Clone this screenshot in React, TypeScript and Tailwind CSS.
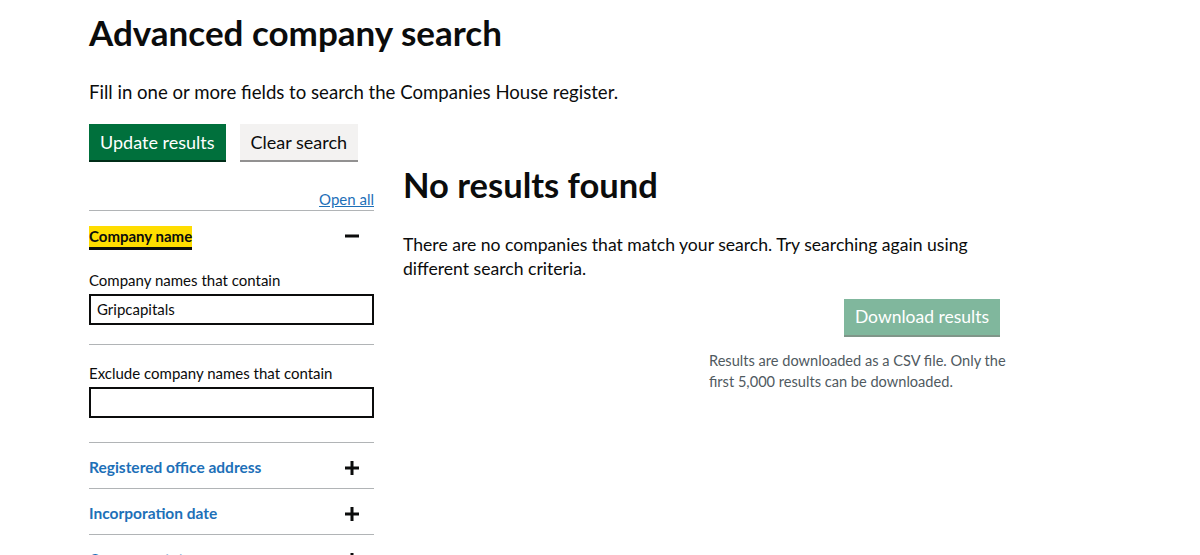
import React from "react"

const font = { fontFamily: 'Lato, "Noto Sans", Arial, sans-serif' }

function Plus() {
  return (
    <svg width="14" height="14" viewBox="0 0 14 14" className="shrink-0">
      <rect x="5.5" y="0" width="3" height="14" fill="#0b0c0c" />
      <rect x="0" y="5.5" width="14" height="3" fill="#0b0c0c" />
    </svg>
  )
}

function Minus() {
  return (
    <svg width="14" height="14" viewBox="0 0 14 14" className="shrink-0">
      <rect x="0" y="5.5" width="14" height="3" fill="#0b0c0c" />
    </svg>
  )
}

function Section({ title }: { title: string }) {
  return (
    <div className="flex h-[46px] items-center justify-between border-b border-[#b1b4b6] pr-[15px] pt-[4px]">
      <span className="text-[15.5px] font-bold text-[#1d70b8]">{title}</span>
      <Plus />
    </div>
  )
}

export default function App() {
  return (
    <div className="min-h-[555px] bg-white text-[#0b0c0c]" style={font}>
      <div className="pl-[89px] pt-[12px]">
        <h1 className="text-[35px] font-bold leading-[40px]">Advanced company search</h1>
        <p className="mt-[28px] text-[18.6px] leading-[25px]">
          Fill in one or more fields to search the Companies House register.
        </p>

        <div className="mt-[19px] flex gap-[14px]">
          <button className="h-[36px] bg-[#00703c] px-[11px] text-[18px] text-white shadow-[0_2px_0_#002d18]">
            Update results
          </button>
          <button className="h-[36px] bg-[#f3f2f1] px-[11px] text-[18px] text-[#0b0c0c] shadow-[0_2px_0_#929191]">
            Clear search
          </button>
        </div>

        <div className="mt-[10px] flex gap-[29px]">
          {/* filters */}
          <div className="w-[285px] pt-[19px]">
            <div className="flex justify-end">
              <a className="text-[15px] leading-[21px] text-[#1d70b8] underline">Open all</a>
            </div>
            <div className="border-t border-[#b1b4b6]">
              <div className="flex h-[50px] items-center justify-between pr-[15px]">
                <span className="bg-[#ffdd00] text-[15px] font-bold leading-[21px] shadow-[0_3px_0_#0b0c0c]">
                  Company name
                </span>
                <Minus />
              </div>
              <div className="border-b border-[#b1b4b6] pb-[19px] pt-[9px]">
                <label className="block text-[15px] leading-[20px]">Company names that contain</label>
                <div className="mt-[4px] flex h-[31px] items-center border-2 border-[#0b0c0c] px-[6px] text-[15px]">
                  Gripcapitals
                </div>
              </div>
              <div className="border-b border-[#b1b4b6] pb-[24px] pt-[18px]">
                <label className="block text-[15px] leading-[20px]">Exclude company names that contain</label>
                <div className="mt-[4px] h-[31px] border-2 border-[#0b0c0c]" />
              </div>
              <Section title="Registered office address" />
              <Section title="Incorporation date" />
              <Section title="Company status" />
            </div>
          </div>

          {/* results */}
          <div className="w-[600px]">
            <h2 className="text-[34.5px] font-bold leading-[30px]">No results found</h2>
            <p className="mt-[33px] text-[17.6px] leading-[24px]">
              There are no companies that match your search. Try searching again using different search criteria.
            </p>
            <div className="mt-[18px] flex justify-end pr-[3px]">
              <button className="h-[36px] bg-[#80b79d] px-[11px] text-[17.5px] text-white shadow-[0_2px_0_#7f9689]">
                Download results
              </button>
            </div>
            <p className="ml-[306px] mt-[15px] w-[310px] text-[14.6px] leading-[21px] text-[#505a5f]">
              Results are downloaded as a CSV file. Only the first 5,000 results can be downloaded.
            </p>
          </div>
        </div>
      </div>
    </div>
  )
}
